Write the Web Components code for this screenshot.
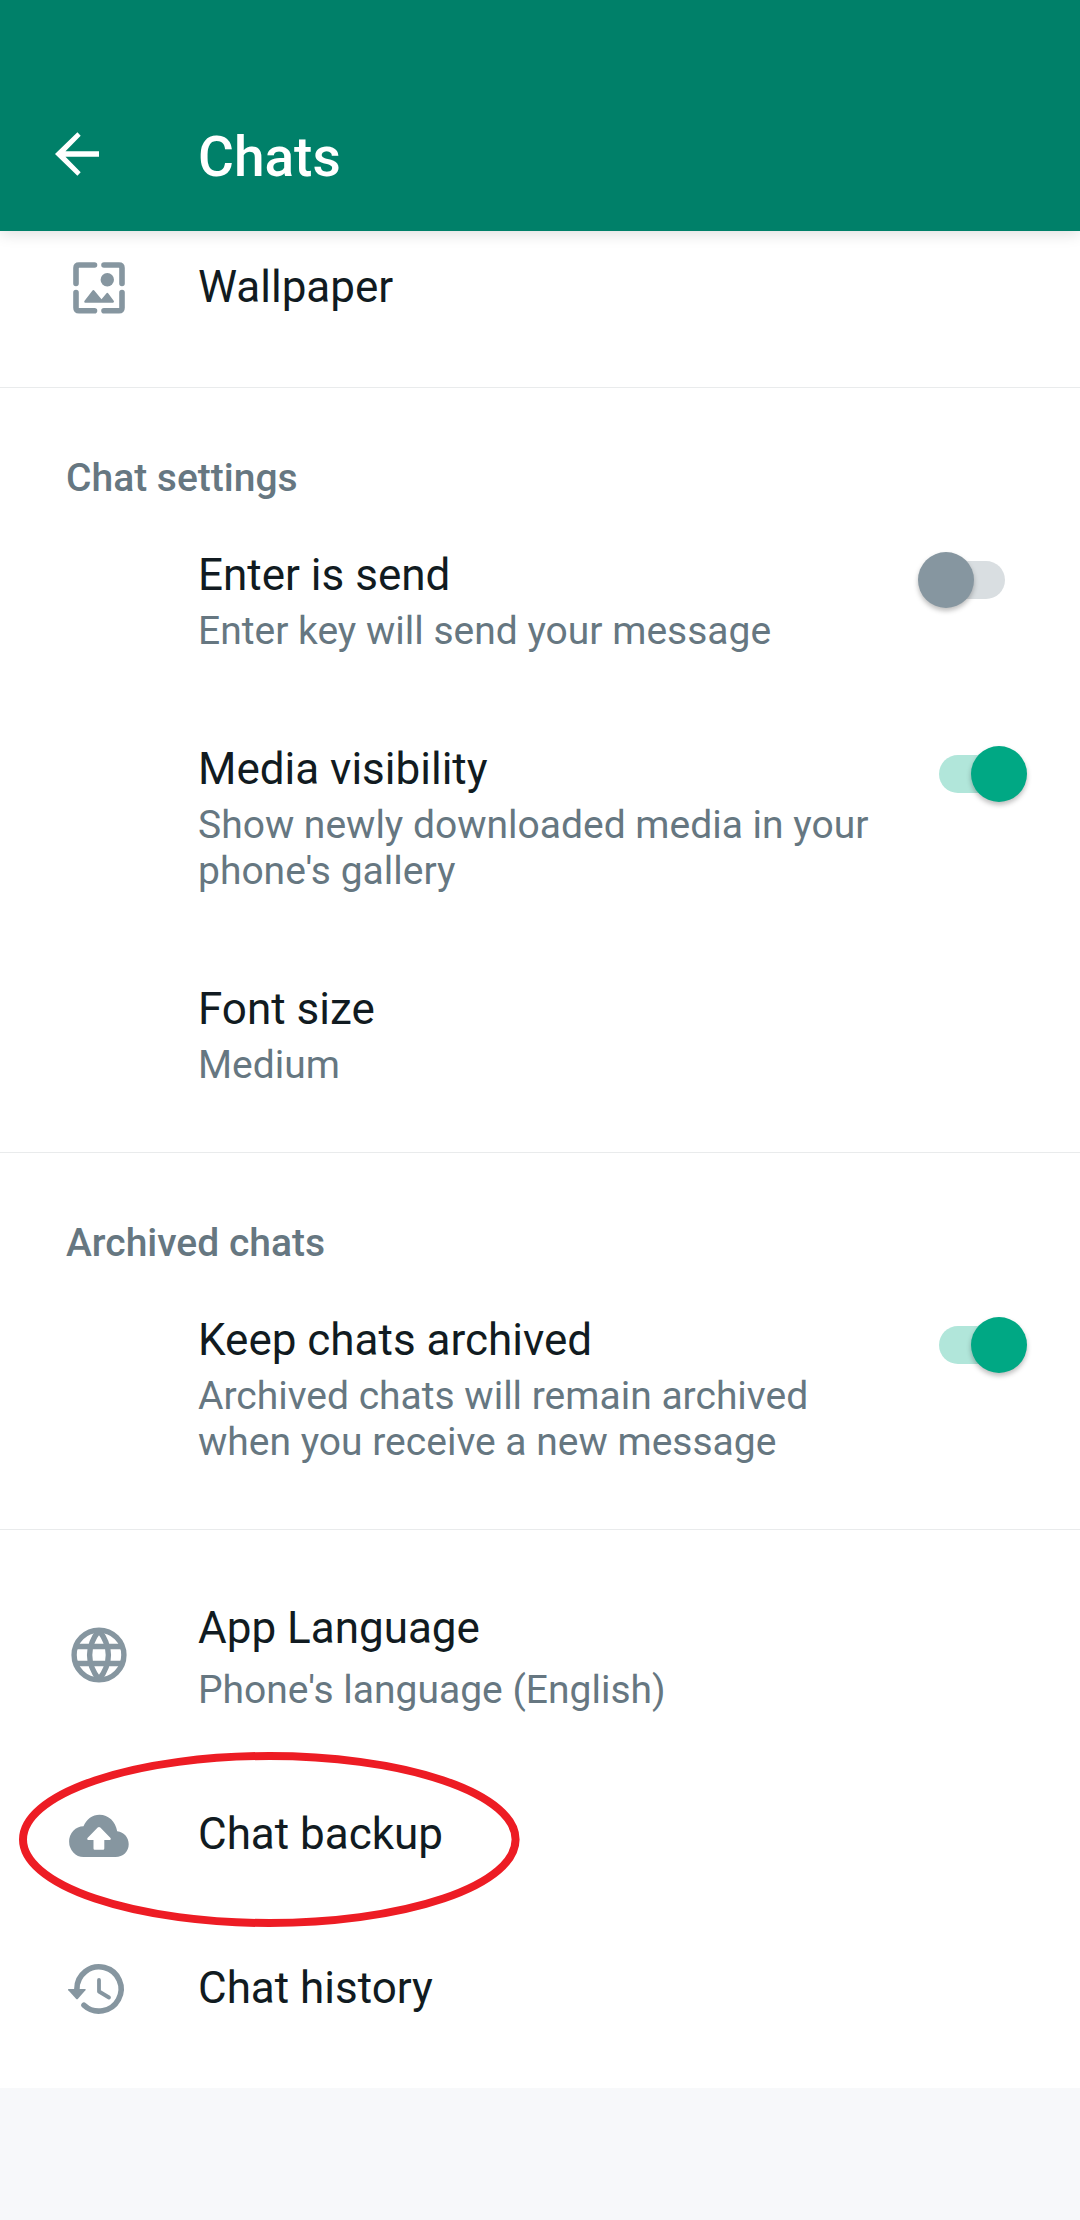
<!DOCTYPE html>
<html lang="en">
<head>
<meta charset="utf-8">
<title>Chats</title>
<style>
html,body{margin:0;padding:0}
body{width:1080px;height:2220px;overflow:hidden;background:#f7f8fa;font-family:Roboto,"Liberation Sans",sans-serif}
</style>
</head>
<body>
<chat-settings-screen></chat-settings-screen>
<script>
const ICONS = {
  back: '<svg width="44" height="44" viewBox="0 0 44 44"><path d="M44 19.3H10.5L25.7 3.8 22.4.2 0 22 22.4 43.8 25.7 40.200 10.500 24.700H44Z" fill="#fff"/></svg>',
  wallpaper: '<svg width="100" height="100" viewBox="0 0 100 100"><g fill="none" stroke="#8696a0" stroke-width="5.600" stroke-linecap="round"><path d="M44.500 25H29Q26 25 26 28V43.500M54 25H69Q72 25 72 28V43.500M26 52.500V67.800Q26 70.800 29 70.800H44.500M72 52.500V67.800Q72 70.800 69 70.800H54"/></g><circle cx="57.300" cy="39.700" r="6.700" fill="#8696a0"/><path d="M35 62.800Q33.400 62.300 34.600 60.800L42.300 50.800Q43.400 49.400 44.500 50.800L51.500 59.300 56.300 53.400Q57.300 52.200 58.300 53.400L63.700 60.800Q64.700 62.300 63 62.800Z" fill="#8696a0"/></svg>',
  globe: '<svg width="100" height="100" viewBox="0 0 100 100"><g fill="none" stroke="#8696a0" stroke-width="5.400"><circle cx="49" cy="50" r="24.900"/><path d="M25 41.500H73M25 58.500H73"/><path d="M49 25.500C36.500 41 36.500 59 49 74.500C61.500 59 61.500 41 49 25.500Z" stroke-linejoin="bevel"/></g></svg>',
  cloud: '<svg width="100" height="100" viewBox="0 0 100 100"><path d="M33.500 72A14.300 15.300 0 0 1 33.500 41.200C36.500 34 42.500 29.700 49.500 29.700C58.500 29.700 65.500 36.500 67.200 46.200C74.200 47 78.700 52.500 78.700 59.200C78.700 66.500 73 72 65.500 72Z" fill="#8696a0"/><path d="M43.500 63.500V55H38.200Q36.300 54.600 37.500 53L47.700 42.500Q49 41.400 50.300 42.500L60.500 53Q61.700 54.600 59.800 55H54.300V63.500Q54.300 64.700 53.100 64.700H44.700Q43.500 64.700 43.500 63.500Z" fill="#fff"/></svg>',
  history: '<svg width="100" height="100" viewBox="0 0 100 100"><g fill="none" stroke="#8696a0" stroke-linecap="round"><path d="M26.900 56V54A22.100 22.100 0 1 1 34 70.200" stroke-width="5.600"/><path d="M49 45V56.500L59 62.500" stroke-width="3.800" stroke-linejoin="round"/></g><path d="M18.800 54Q17.300 54 18.300 55.300L26 63.800Q27 64.900 28 63.800L35.400 55.300Q36.400 54 35 54Z" fill="#8696a0"/></svg>'
};

class GlyphIcon extends HTMLElement {
  connectedCallback() {
    this.attachShadow({mode: 'open'}).innerHTML =
      '<style>:host{display:block;flex:none}svg{display:block}</style>' + ICONS[this.getAttribute('name')];
  }
}
customElements.define('glyph-icon', GlyphIcon);

class AppBar extends HTMLElement {
  constructor() {
    super();
    this.attachShadow({mode: 'open'}).innerHTML = `<style>
      :host{display:flex;height:231px;box-sizing:border-box;padding:0 0 0 55px;background:#008069;position:relative;z-index:1;box-shadow:0 3px 14px rgba(0,0,0,.13)}
      glyph-icon{margin-top:132px}
      h1{margin:125px 0 0 99px;font-size:55px;line-height:64px;font-weight:500;color:#fff;white-space:nowrap}
    </style><glyph-icon name="back"></glyph-icon><h1><slot></slot></h1>`;
  }
}
customElements.define('app-bar', AppBar);

class ToggleSwitch extends HTMLElement {
  constructor() {
    super();
    this.attachShadow({mode: 'open'}).innerHTML = `<style>
      :host{display:flex;align-items:center;flex:none;width:66px;height:38px;border-radius:19px;background:#d9dee1}
      i{flex:none;width:56px;height:56px;border-radius:50%;background:#8696a0;margin-left:-21px;box-shadow:0 3px 5px rgba(0,0,0,.26)}
      :host([checked]){background:#b1e6da}
      :host([checked]) i{background:#00a884;margin-left:32px}
    </style><i></i>`;
  }
}
customElements.define('toggle-switch', ToggleSwitch);

class SettingRow extends HTMLElement {
  constructor() {
    super();
    this.attachShadow({mode: 'open'}).innerHTML = `<style>
      :host{display:flex;align-items:flex-start;box-sizing:border-box;height:var(--h)}
      .lead{flex:none;width:148px;padding-left:50px;margin-top:var(--icon-top,0)}
      .text{flex:none;width:700px;padding-top:var(--top,0)}
      .title{font-size:44px;line-height:52px;color:#111b21;white-space:nowrap}
      .sub{font-size:39px;line-height:46px;color:#667781;margin-top:var(--gap,7px);white-space:nowrap}
      ::slotted(toggle-switch){margin-top:var(--switch-top,0);margin-left:41px}
    </style><div class="lead"><slot name="icon"></slot></div>
    <div class="text"><div class="title"><slot></slot></div><div class="sub"><slot name="sub"></slot></div></div>
    <slot name="control"></slot>`;
  }
}
customElements.define('setting-row', SettingRow);

class SettingSection extends HTMLElement {
  constructor() {
    super();
    const label = this.getAttribute('label');
    this.attachShadow({mode: 'open'}).innerHTML = `<style>
      :host{display:block;box-sizing:border-box;height:var(--h);background:#fff;border-bottom:1px solid #e9ebec}
      :host([last]){border-bottom:0}
      h2{margin:0;padding:67px 0 0 66px;height:46px;font-size:39px;line-height:46px;font-weight:500;color:#667781}
    </style>` + (label ? `<h2>${label}</h2>` : '') + '<slot></slot>';
  }
}
customElements.define('setting-section', SettingSection);

class HighlightRing extends HTMLElement {
  constructor() {
    super();
    this.attachShadow({mode: 'open'}).innerHTML = `<style>
      :host{display:block;position:absolute;left:19px;top:1752px;z-index:2}svg{display:block}
    </style><svg width="501" height="176" viewBox="0 0 501 176"><ellipse cx="250.300" cy="87.500" rx="246.300" ry="83.500" fill="none" stroke="#ed1c24" stroke-width="8"/></svg>`;
  }
}
customElements.define('highlight-ring', HighlightRing);

class ChatSettingsScreen extends HTMLElement {
  constructor() {
    super();
    this.attachShadow({mode: 'open'}).innerHTML = `<style>
      :host{display:block;position:relative;width:1080px;height:2220px}
    </style>
    <app-bar>Chats</app-bar>
    <setting-section style="--h:157px">
      <setting-row style="--h:156px;--top:30px;--icon-top:9px"><glyph-icon slot="icon" name="wallpaper"></glyph-icon>Wallpaper</setting-row>
    </setting-section>
    <setting-section label="Chat settings" style="--h:765px">
      <setting-row style="--h:194px;--top:48px;--switch-top:60px">Enter is send<span slot="sub">Enter key will send your message</span><toggle-switch slot="control"></toggle-switch></setting-row>
      <setting-row style="--h:240px;--top:48px;--switch-top:60px">Media visibility<span slot="sub">Show newly downloaded media in your<br>phone's gallery</span><toggle-switch slot="control" checked></toggle-switch></setting-row>
      <setting-row style="--h:200px;--top:48px">Font size<span slot="sub">Medium</span></setting-row>
    </setting-section>
    <setting-section label="Archived chats" style="--h:377px">
      <setting-row style="--h:240px;--top:48px;--switch-top:60px">Keep chats archived<span slot="sub">Archived chats will remain archived<br>when you receive a new message</span><toggle-switch slot="control" checked></toggle-switch></setting-row>
    </setting-section>
    <setting-section last style="--h:558px">
      <setting-row style="--h:230px;--top:72px;--gap:13px;--icon-top:75px"><glyph-icon slot="icon" name="globe"></glyph-icon>App Language<span slot="sub">Phone's language (English)</span></setting-row>
      <setting-row style="--h:154px;--top:48px;--icon-top:25px"><glyph-icon slot="icon" name="cloud"></glyph-icon>Chat backup</setting-row>
      <setting-row style="--h:154px;--top:48px;--icon-top:21px"><glyph-icon slot="icon" name="history"></glyph-icon>Chat history</setting-row>
    </setting-section>
    <highlight-ring></highlight-ring>`;
  }
}
customElements.define('chat-settings-screen', ChatSettingsScreen);
</script>
</body>
</html>
